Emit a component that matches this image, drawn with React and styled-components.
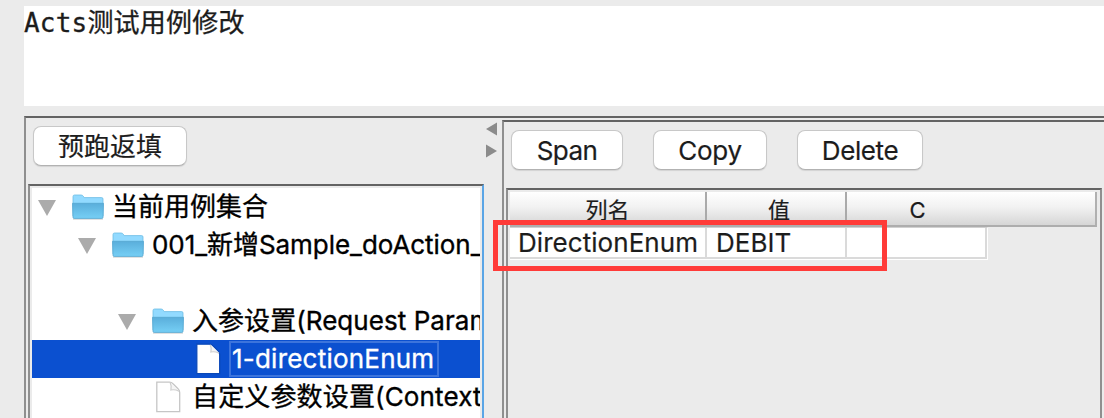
import React from "react";
import styled, { createGlobalStyle } from "styled-components";

const GlobalStyle = createGlobalStyle`
  *, *::before, *::after { box-sizing: border-box; }
  body {
    margin: 0;
    background: #ebebeb;
    overflow: hidden;
    font-family: Inter, "Noto Sans CJK SC", sans-serif;
    font-size: 26px;
    color: #1c1c1c;
  }
`;

const Window = styled.div`
  position: relative;
  display: flex;
  flex-direction: column;
  width: 1104px;
  height: 418px;
  padding: 6px 0 0 24px;
  background: #ebebeb;
  overflow: hidden;
`;

const Description = styled.div`
  flex: none;
  height: 100px;
  background: #fff;
  font-family: "DejaVu Sans Mono", "Noto Sans CJK SC", monospace;
  line-height: 34px;
  letter-spacing: 0.2px;
  -webkit-text-stroke: 0.3px currentColor;
  white-space: pre;
`;

const SplitPane = styled.div`
  flex: 1;
  display: flex;
  min-height: 0;
  margin-top: 10px;
  border-top: 2px solid #636363;
  border-left: 2px solid #8f8f8f;
`;

const LeftPane = styled.div`
  flex: none;
  display: flex;
  flex-direction: column;
  width: 458px;
  padding: 8px 0 0 2px;
`;

const Button = styled.button`
  flex: none;
  width: ${(p) => p.$width}px;
  height: 40px;
  padding: 2px 0 0;
  border: 1px solid #c8c8c8;
  border-bottom-color: #b2b2b2;
  border-radius: 8px;
  background: #fff;
  box-shadow: 0 1px 1px rgba(0, 0, 0, 0.1);
  font: inherit;
  line-height: 36px;
  letter-spacing: ${(p) => p.$spacing || 0}px;
  color: inherit;
  -webkit-text-stroke: 0.2px currentColor;
  white-space: nowrap;
`;

const TreeToolbar = styled.div`
  display: flex;
  height: 58px;
  padding-left: 5px;
`;

const TreeScroll = styled.div`
  flex: 1;
  min-height: 0;
  display: flex;
  border-top: 2px solid #636363;
  border-left: 2px solid #8f8f8f;
  border-right: 2px solid #5aa5e6;
  padding: 2px 2px 0 2px;
`;

const Tree = styled.div`
  flex: 1;
  min-width: 0;
  background: #fff;
  color: #000;
  overflow: hidden;
`;

const TreeRow = styled.div`
  display: flex;
  align-items: center;
  height: 38px;
  padding-left: ${(p) => p.$indent}px;
  background: ${(p) => (p.$selected ? "#0b50d0" : "transparent")};
  color: ${(p) => (p.$selected ? "#fff" : "inherit")};
`;

const Toggle = styled.svg`
  flex: none;
  width: 18px;
  height: 16px;
  margin: 2px 16px 0 0;
`;

const FolderSvg = styled.svg`
  flex: none;
  width: 32px;
  height: 26px;
  margin-right: 8px;
`;

const FileSvg = styled.svg`
  flex: none;
  width: 26px;
  height: 32px;
  margin-right: ${(p) => p.$gap}px;
`;

const Label = styled.span`
  flex: none;
  height: 36px;
  line-height: 36px;
  letter-spacing: ${(p) => p.$spacing || 0}px;
  -webkit-text-stroke: 0.35px currentColor;
  white-space: pre;
`;

const SelectedLabel = styled(Label)`
  width: 210px;
  padding-left: 1px;
  border: 2px solid #3c74dc;
  line-height: 32px;
`;

const Divider = styled.div`
  flex: none;
  display: flex;
  flex-direction: column;
  align-items: center;
  gap: 8px;
  width: 18px;
  padding: 4px 3px 0 0;
`;

const DividerArrow = styled.svg`
  flex: none;
  width: 12px;
  height: 14px;
`;

const RightPane = styled.div`
  flex: 1;
  min-width: 0;
  display: flex;
  flex-direction: column;
  margin-top: 2px;
  padding: 8px 2px 0 2px;
  border-top: 2px solid #636363;
  border-left: 2px solid #8f8f8f;
`;

const TableToolbar = styled.div`
  display: flex;
  gap: 30px;
  height: 58px;
  padding-left: 5px;
`;

const TableScroll = styled.div`
  flex: 1;
  min-height: 0;
  border-top: 2px solid #636363;
  border-left: 2px solid #8f8f8f;
  border-right: 2px solid #8f8f8f;
  padding: 2px 2px 0 2px;
`;

const HeaderRow = styled.div`
  display: flex;
  width: 587px;
  height: 35px;
  border-right: 2px solid #b0b0b0;
  border-bottom: 2px solid #adadad;
  background: linear-gradient(#ffffff, #f2f2f2 45%, #d6d6d6);
  font-size: 22px;
`;

const HeaderCell = styled.div`
  flex: none;
  width: ${(p) => p.$width}px;
  height: 33px;
  padding-top: 1px;
  padding-left: ${(p) => p.$shift || 0}px;
  border-right: ${(p) => (p.$last ? "none" : "2px solid #aaaaaa")};
  line-height: 35px;
  text-align: center;
  -webkit-text-stroke: 0.2px currentColor;
`;

const DataRow = styled.div`
  display: flex;
  width: 478px;
  height: 33px;
  border-top: 1px solid #d0d0d0;
  border-right: 1px solid #fff;
  border-bottom: 1px solid #fff;
`;

const DataCell = styled.div`
  flex: none;
  width: ${(p) => p.$width}px;
  height: 31px;
  padding-left: ${(p) => p.$pad || 9}px;
  border-right: 2px solid #dadada;
  border-bottom: 2px solid #dadada;
  background: #fff;
  line-height: 30px;
  letter-spacing: ${(p) => p.$spacing || 0}px;
  -webkit-text-stroke: 0.2px currentColor;
  white-space: nowrap;
`;

const Highlight = styled.div`
  position: absolute;
  left: 493px;
  top: 220px;
  width: 394px;
  height: 51px;
  border: 5px solid #ff3b38;
`;

function Expander() {
  return (
    <Toggle viewBox="0 0 18 16">
      <path d="M0 0H18L9 16Z" fill="#ababab" />
    </Toggle>
  );
}

function FolderIcon() {
  return (
    <FolderSvg viewBox="0 0 32 26">
      <defs>
        <linearGradient id="folderFront" x1="0" y1="0" x2="0" y2="1">
          <stop offset="0" stopColor="#5aaedb" />
          <stop offset="1" stopColor="#76cff5" />
        </linearGradient>
      </defs>
      <path d="M1 25H31" stroke="#000" strokeOpacity=".16" strokeWidth="1.5" />
      <path
        d="M1 22V2.5Q1 1 2.5 1H9Q10.5 1 11.3 2.2L12.2 3.6H29.5Q31 3.6 31 5V22Z"
        fill="#92daff"
        stroke="#6dbce3"
        strokeWidth=".8"
      />
      <path
        d="M.5 9.3H31.5L31 23.2Q31 24.4 29.8 24.4H2.2Q1 24.4 1 23.2Z"
        fill="url(#folderFront)"
        stroke="#55a7d0"
        strokeWidth=".8"
      />
    </FolderSvg>
  );
}

function FileIcon({ gap, selected }) {
  return (
    <FileSvg viewBox="0 0 26 32" $gap={gap}>
      <path
        d="M1.8 1.2H14.5Q16.5 1.2 18 2.8L23 7.8Q24.7 9.5 24.7 11.5V30.6H1.8Z"
        fill="#fff"
        stroke={selected ? "#0b48b8" : "#c6c6c6"}
        strokeWidth="1.3"
      />
      <path
        d="M15.2 1.8Q17 5.5 15.9 9Q20 8.2 24 10.2"
        fill="#f5f5f5"
        stroke="#cecece"
        strokeWidth="1.2"
      />
    </FileSvg>
  );
}

export default function App() {
  return (
    <>
      <GlobalStyle />
      <Window>
        <Description>Acts测试用例修改</Description>
        <SplitPane>
          <LeftPane>
            <TreeToolbar>
              <Button $width={154}>预跑返填</Button>
            </TreeToolbar>
            <TreeScroll>
              <Tree>
                <TreeRow $indent={6}>
                  <Expander />
                  <FolderIcon />
                  <Label>当前用例集合</Label>
                </TreeRow>
                <TreeRow $indent={46}>
                  <Expander />
                  <FolderIcon />
                  <Label $spacing={-0.05}>001_新增Sample_doAction_</Label>
                </TreeRow>
                <TreeRow />
                <TreeRow $indent={86}>
                  <Expander />
                  <FolderIcon />
                  <Label $spacing={0.05}>入参设置(Request Param</Label>
                </TreeRow>
                <TreeRow $indent={163} $selected>
                  <FileIcon gap={8} selected />
                  <SelectedLabel $spacing={0.22}>1-directionEnum</SelectedLabel>
                </TreeRow>
                <TreeRow $indent={123}>
                  <FileIcon gap={11} />
                  <Label $spacing={0.15}>自定义参数设置(Context</Label>
                </TreeRow>
              </Tree>
            </TreeScroll>
          </LeftPane>
          <Divider>
            <DividerArrow viewBox="0 0 12 14">
              <path d="M11 .5V13.5L0 7Z" fill="#8b8b8b" />
            </DividerArrow>
            <DividerArrow viewBox="0 0 12 14">
              <path d="M0 .5V13.5L11 7Z" fill="#8b8b8b" />
            </DividerArrow>
          </Divider>
          <RightPane>
            <TableToolbar>
              <Button $width={112} $spacing={-0.6}>Span</Button>
              <Button $width={114} $spacing={-0.3}>Copy</Button>
              <Button $width={126} $spacing={-0.4}>Delete</Button>
            </TableToolbar>
            <TableScroll>
              <HeaderRow>
                <HeaderCell $width={197}>列名</HeaderCell>
                <HeaderCell $width={140} $shift={6}>值</HeaderCell>
                <HeaderCell $width={141} $last>C</HeaderCell>
              </HeaderRow>
              <DataRow>
                <DataCell $width={197} $pad={8} $spacing={0.05}>DirectionEnum</DataCell>
                <DataCell $width={140}>DEBIT</DataCell>
                <DataCell $width={140} />
              </DataRow>
            </TableScroll>
          </RightPane>
        </SplitPane>
        <Highlight />
      </Window>
    </>
  );
}
